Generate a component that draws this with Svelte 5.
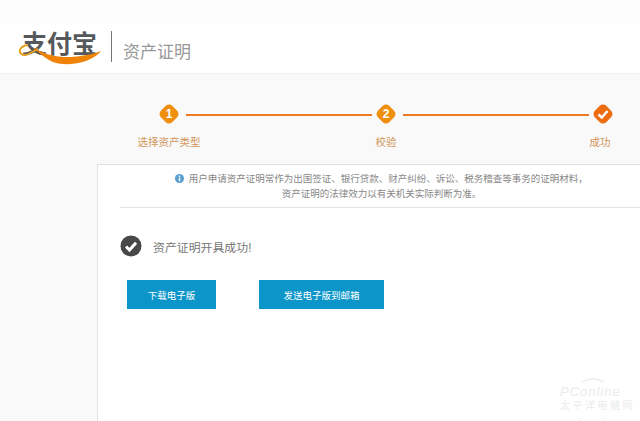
<script>
	const steps = [
		{ label: "选择资产类型", mark: "1", color: "#ef8f0e" },
		{ label: "校验", mark: "2", color: "#ef8f0e" },
		{ label: "成功", mark: "check", color: "#ee6c10" },
	];
</script>

<div class="page">
	<header>
		<div class="logo">
			<span class="logoText">支付宝</span>
			<svg class="swoosh" width="86" height="30" viewBox="0 0 84 30">
				<path d="M10 8C1 9 -1 17 6 18C11 18.500 15 14 20 12" fill="none" stroke="#e9a01c" stroke-width="2" />
				<path d="M14 10C24 15 30 19 46 20C60 20 72 18 83 14C76 23 60 28 44 27C30 26 24 17 14 10Z" fill="#ee8308" />
			</svg>
		</div>
		<div class="sep"></div>
		<h1>资产证明</h1>
	</header>

	<div class="steps">
		{#each steps as step, i}
			{#if i > 0}
				<div class="line"></div>
			{/if}
			<div class="step">
				<svg width="24" height="24" viewBox="0 0 24 24">
					<rect x="4" y="4" width="16" height="16" rx="4.500" transform="rotate(45 12 12)" fill={step.color} />
					{#if step.mark === "check"}
						<path d="M7.500 12.500L10.800 15.500L16.500 9" fill="none" stroke="#fff" stroke-width="2.600" />
					{:else}
						<text x="12" y="16" text-anchor="middle" class="mark">{step.mark}</text>
					{/if}
				</svg>
				<span class="label">{step.label}</span>
			</div>
		{/each}
	</div>

	<main>
		<div class="notice">
			<p>
				<svg width="9" height="9" viewBox="0 0 10 10">
					<circle cx="5" cy="5" r="5" fill="#5a9fcf" />
					<rect x="4.200" y="4" width="1.600" height="4" fill="#fff" />
					<rect x="4.200" y="1.800" width="1.600" height="1.500" fill="#fff" />
				</svg>
				用户申请资产证明常作为出国签证、银行贷款、财产纠纷、诉讼、税务稽查等事务的证明材料，
			</p>
			<p>资产证明的法律效力以有关机关实际判断为准。</p>
		</div>

		<div class="result">
			<svg width="22" height="22" viewBox="0 0 22 22">
				<circle cx="11" cy="11" r="10.500" fill="#484848" />
				<path d="M6 11.500L9.500 15L16 7.800" fill="none" stroke="#fff" stroke-width="3" />
			</svg>
			<span>资产证明开具成功!</span>
		</div>

		<div class="actions">
			<button class="download">下载电子版</button>
			<button class="send">发送电子版到邮箱</button>
		</div>
	</main>

	<div class="watermark">
		<svg class="wmArc" width="50" height="50" viewBox="0 0 50 50">
			<path d="M14 6A22 22 0 0 1 36 6M12 44A22 22 0 0 0 38 44" fill="none" stroke="#eee" stroke-width="1.500" />
		</svg>
		<span class="wmLogo">PConline</span>
		<span class="wmName">太平洋电脑网</span>
	</div>
</div>

<style>
	:global(body) {
		margin: 0;
		background: #f9f9f9;
	}

	.page {
		position: relative;
		height: 421px;
		overflow: hidden;
		font-family: "Liberation Sans", "Noto Sans CJK SC", sans-serif;
	}

	header {
		height: 74px;
		box-sizing: border-box;
		padding-left: 22px;
		display: flex;
		align-items: center;
		background: #fff;
		border-top: 24px solid #fdfdfd;
		border-bottom: 1px solid #f0f0f0;
	}

	.logo {
		position: relative;
		width: 79px;
		height: 34px;
		margin-top: -6px;
	}

	.logoText {
		display: block;
		font-size: 25px;
		line-height: 30px;
		font-weight: 700;
		color: #56595c;
	}

	.swoosh {
		position: absolute;
		left: -5px;
		top: 8px;
	}

	.sep {
		width: 1px;
		height: 31px;
		margin: -5px 11px 0 10px;
		background: #777;
	}

	h1 {
		margin: 3px 0 0;
		font-size: 17px;
		font-weight: 400;
		color: #999;
	}

	.steps {
		height: 90px;
		box-sizing: border-box;
		padding: 28px 6px 0 138px;
		display: flex;
		align-items: flex-start;
	}

	.step {
		width: 62px;
		flex-shrink: 0;
		display: flex;
		flex-direction: column;
		align-items: center;
	}

	.step svg {
		display: block;
	}

	.step:last-child .label {
		margin-right: 6px;
	}

	.mark {
		font-size: 12px;
		font-weight: 700;
		fill: #fff;
	}

	.label {
		margin-top: 9px;
		font-size: 10.500px;
		line-height: 15px;
		color: #d2955a;
		white-space: nowrap;
	}

	.line {
		flex: 1;
		height: 2px;
		margin: 12px -17px 0 -14px;
		background: #ee7a22;
	}

	main {
		height: 257px;
		box-sizing: border-box;
		margin-left: 97px;
		padding-left: 22px;
		background: #fff;
		border-left: 1px solid #e2e2e2;
		border-top: 1px solid #e2e2e2;
	}

	.notice {
		height: 43px;
		box-sizing: border-box;
		padding: 6px 0 0 3px;
		border-bottom: 1px solid #e4e4e4;
		text-align: center;
		font-size: 9.500px;
		line-height: 15px;
		color: #888;
	}

	.notice p {
		margin: 0;
	}

	.notice svg {
		margin-right: 2px;
		vertical-align: -1px;
	}

	.result {
		margin-top: 27px;
		display: flex;
		align-items: center;
		gap: 11px;
		font-size: 11.900px;
		color: #777;
	}

	.actions {
		margin: 23px 0 0 7px;
		display: flex;
		gap: 43px;
	}

	button {
		height: 29px;
		padding: 0;
		border: 0;
		background: #0b95c9;
		color: #fff;
		font: 9.500px "Liberation Sans", "Noto Sans CJK SC", sans-serif;
	}

	.download {
		width: 89px;
	}

	.send {
		width: 125px;
	}

	.watermark {
		position: absolute;
		left: 560px;
		top: 384px;
		display: flex;
		flex-direction: column;
		color: #ebebeb;
	}

	.wmArc {
		position: absolute;
		left: 8px;
		top: -8px;
	}

	.wmLogo {
		font-size: 13px;
		line-height: 16px;
		font-style: italic;
		letter-spacing: 1px;
	}

	.wmName {
		font-size: 10px;
		line-height: 12px;
		letter-spacing: 2.500px;
		white-space: nowrap;
	}
</style>
